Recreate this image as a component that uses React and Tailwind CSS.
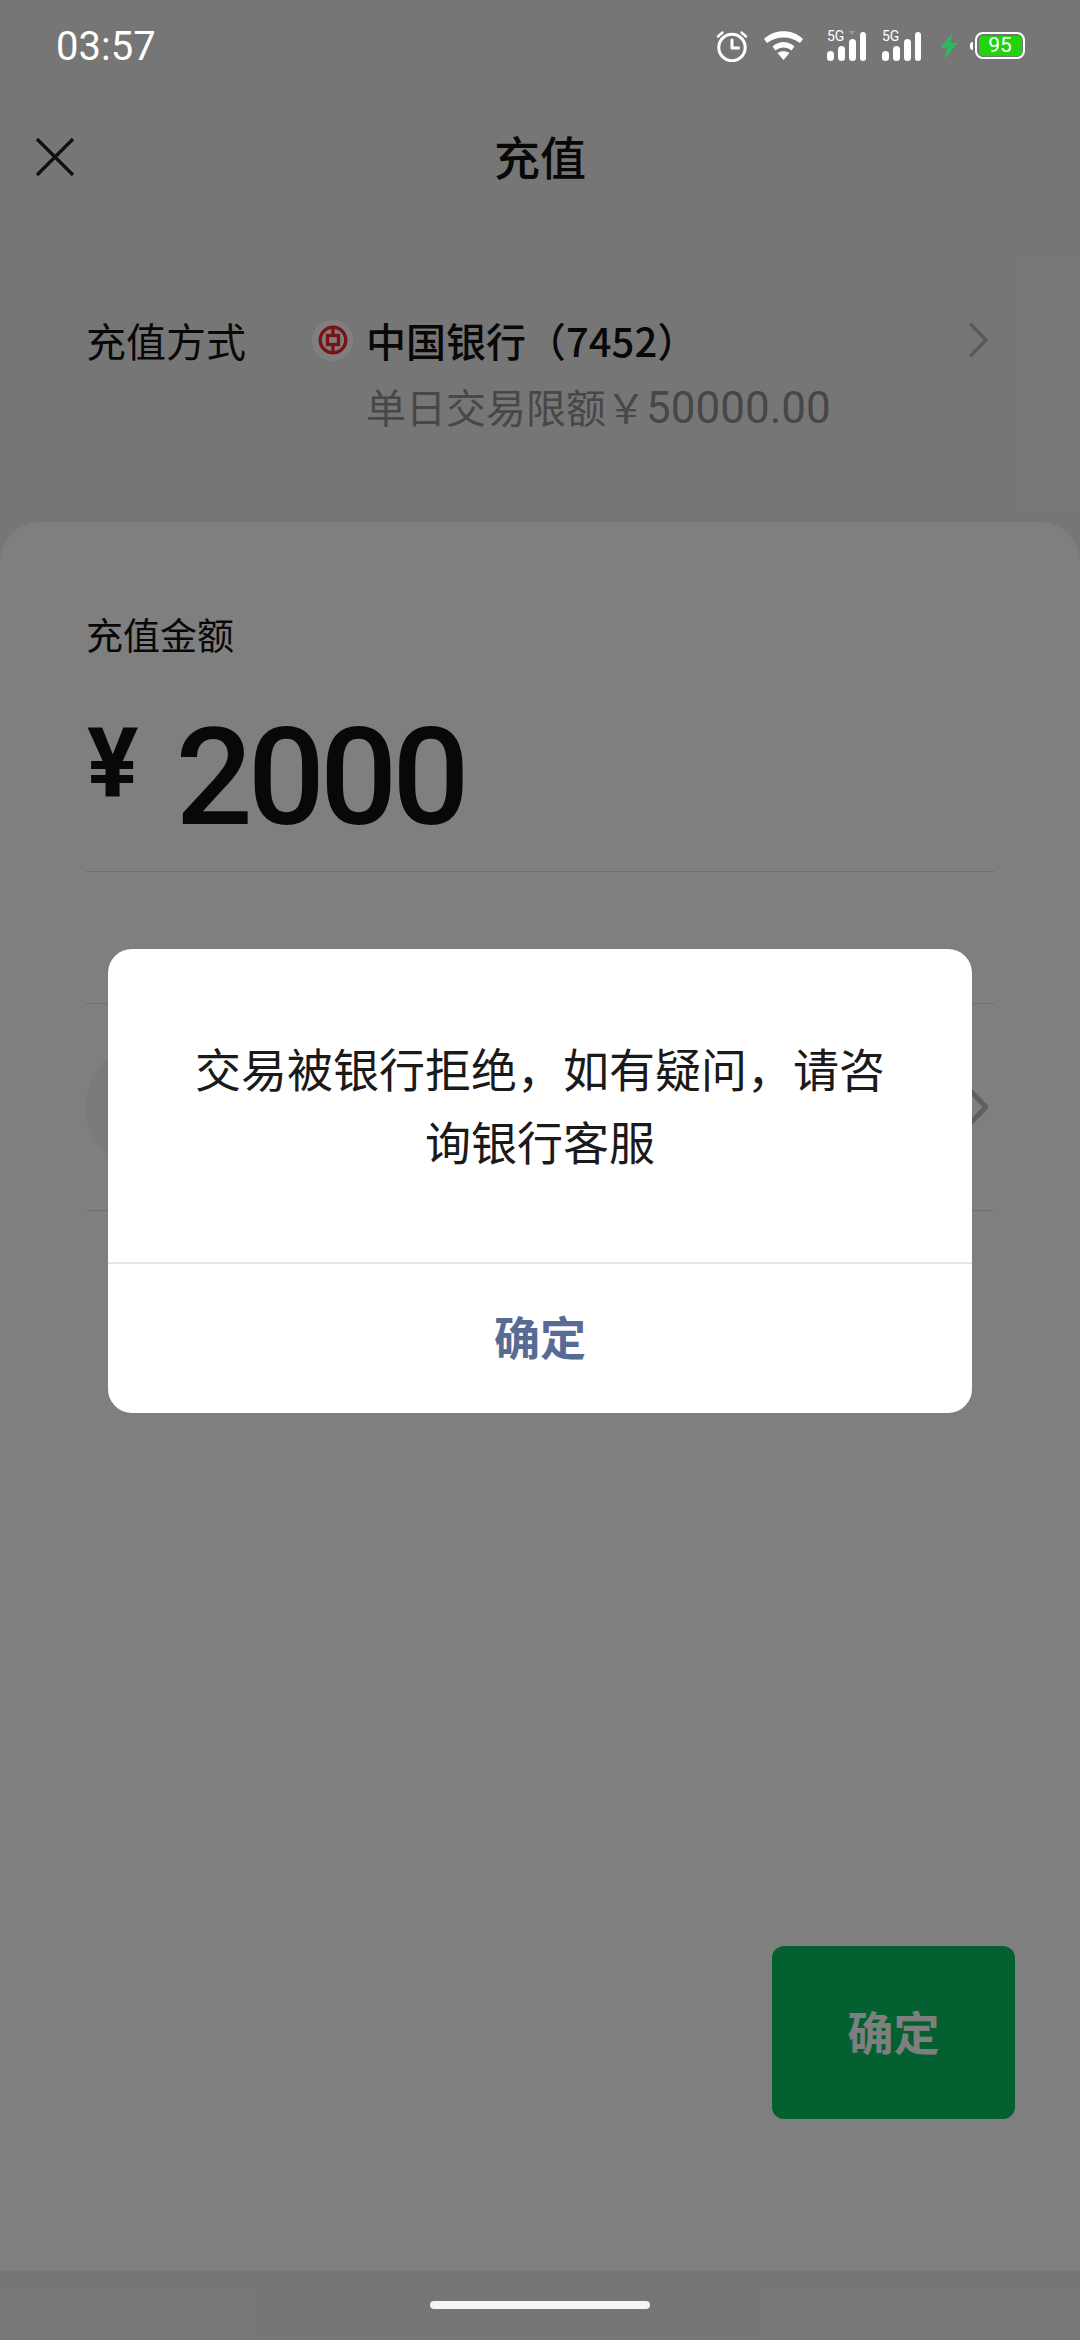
import React from 'react'

const cjk = '"Noto Sans CJK SC", "Noto Sans", sans-serif'

function Alarm() {
    return (
        <svg width="34" height="32" viewBox="0 0 34 32" fill="none" stroke="#fff" strokeLinecap="round">
            <circle cx="17" cy="17.5" r="13.2" strokeWidth="3" />
            <path d="M17 10v8h6.5" strokeWidth="3" strokeLinejoin="round" />
            <path d="M3 6.5 7.5 2.5M31 6.5 26.5 2.5" strokeWidth="2.5" />
        </svg>
    )
}

function Wifi() {
    return (
        <svg width="40" height="29" viewBox="0 0 40 29" fill="#fff">
            <path d="M0 8C10-2.5 29-2.5 39 8L36 12C27 4.5 12 4.5 3 12Z" />
            <path d="M8.5 15.5C15 9.5 24 9.5 30.5 15.5L27.5 19.5C23 15.5 16 15.5 11.5 19.5Z" />
            <path d="M13.5 22C17 19.8 22 19.8 25.5 22L19.5 29Z" />
        </svg>
    )
}

function Signal({ arrow }) {
    return (
        <div className="relative w-[39px] h-[30px]">
            <span className="absolute left-0 top-[-1px] text-[14px] leading-[12px] text-white" style={{ fontFamily: 'Roboto, sans-serif' }}>5G</span>
            {arrow && <div className="absolute left-[22px] top-0 w-0 h-0 border-x-[3px] border-t-[4px] border-x-transparent border-t-[#9a9a9a]" />}
            <div className="absolute inset-x-0 bottom-0 flex items-end justify-between">
                <div className="w-[7px] h-[10px] rounded-full bg-white" />
                <div className="w-[7px] h-[15px] rounded-full bg-white" />
                <div className="w-[7px] h-[22px] rounded-full bg-white" />
                <div className="w-[6px] h-[29px] rounded-full bg-white" />
            </div>
        </div>
    )
}

function Bolt() {
    return (
        <svg width="18" height="26" viewBox="0 0 18 26" className="ml-[19px]">
            <path d="M12.5 0 0 15h7L4.5 26 18 10h-7.5Z" fill="#2fb95e" />
        </svg>
    )
}

function Battery() {
    return (
        <div className="flex items-center ml-[12px]">
            <div className="w-[3px] h-[8px] bg-white rounded-l-full mr-[2px]" />
            <div className="w-[50px] h-[27px] rounded-[8px] border-[2.5px] border-white p-[1.5px]">
                <div className="w-full h-full rounded-[3px] bg-[#21d40e] flex items-center justify-center text-white text-[21px] leading-none" style={{ fontFamily: 'Roboto, sans-serif' }}>95</div>
            </div>
        </div>
    )
}

function BankLogo() {
    return (
        <div className="w-[41px] h-[41px] rounded-full bg-white flex items-center justify-center shrink-0">
            <svg width="30" height="30" viewBox="0 0 30 30" fill="none" stroke="#f02830" strokeWidth="3.4">
                <circle cx="15" cy="15" r="12.8" />
                <rect x="9.5" y="10.5" width="11" height="9" />
                <path d="M15 3v7.5M15 19.5V27" />
            </svg>
        </div>
    )
}

function Chevron({ className, width = 3.6, color = '#b4b4b4' }) {
    return (
        <svg width="20" height="36" viewBox="0 0 20 36" fill="none" stroke={color} strokeWidth={width} className={className}>
            <path d="M2 1.5 18 18 2 34.5" />
        </svg>
    )
}

export default function App() {
    return (
        <div className="relative w-[1080px] h-[2340px] overflow-hidden bg-[#ededed] flex flex-col text-[#111111]" style={{ fontFamily: cjk }}>
            {/* status bar stays bright above the dim layer */}
            <div className="relative z-20 h-[90px] shrink-0 flex items-center justify-between pl-[56px] pr-[55px] pt-[1px]">
                <span className="text-[40px] text-white leading-none mt-[3px]" style={{ fontFamily: 'Roboto, sans-serif' }}>03:57</span>
                <div className="flex items-center">
                    <Alarm />
                    <div className="ml-[15px]"><Wifi /></div>
                    <div className="ml-[23px]"><Signal arrow /></div>
                    <div className="ml-[16px]"><Signal /></div>
                    <Bolt />
                    <Battery />
                </div>
            </div>

            <div className="h-[136px] shrink-0 relative flex items-center justify-center pb-[6px]">
                <svg width="40" height="40" viewBox="0 0 40 40" fill="none" stroke="#222" strokeWidth="3.4" className="absolute left-[35px] top-[47px]">
                    <path d="M2 2 38 38M38 2 2 38" />
                </svg>
                <span className="text-[46px] font-medium leading-none">充值</span>
            </div>

            <div className="h-[296px] shrink-0 px-[86px] pt-[88px] flex">
                <span className="text-[40px] leading-[52px] w-[226px] shrink-0">充值方式</span>
                <div className="flex-1 min-w-0">
                    <div className="flex items-center h-[52px] relative">
                        <BankLogo />
                        <span className="ml-[13px] text-[40px] font-medium leading-none">中国银行（7452）</span>
                        <Chevron className="absolute right-[6px] top-[8px]" />
                    </div>
                    <div className="mt-[14px] ml-[54px] text-[40px] leading-[52px] text-[#8f8f8f] whitespace-nowrap">
                        单日交易限额￥<span className="text-[44px]" style={{ fontFamily: 'Roboto, sans-serif' }}>50000.00</span>
                    </div>
                </div>
            </div>

            <div className="flex-1 min-h-0 bg-white rounded-t-[40px] px-[86px] flex flex-col">
                <div className="text-[37px] leading-[48px] mt-[88px]">充值金额</div>
                <div className="flex items-start h-[150px] mt-[64px] border-b border-[#dcdcdc]" style={{ fontFamily: 'Roboto, sans-serif' }}>
                    <span className="text-[96px] font-bold leading-[96px] ml-[1px] mt-[-7px]">¥</span>
                    <span className="text-[136px] font-medium leading-[112px] tracking-[-5px] ml-[37px]">2000</span>
                </div>
                <div className="h-[132px] border-b border-[#dcdcdc]" />
                <div className="h-[207px] border-b border-[#dcdcdc] flex items-center justify-between">
                    <div className="w-[130px] h-[130px] rounded-full bg-[#f4f4f4]" />
                    <Chevron className="mr-[6px]" width={5} color="#bebebe" />
                </div>
                <div className="flex-1 min-h-0" />
                <div className="self-end w-[243px] h-[173px] mr-[-21px] mb-[152px] pb-[4px] rounded-[12px] bg-[#07c160] text-white text-[46px] font-bold flex items-center justify-center">确定</div>
            </div>

            <div className="h-[69px] shrink-0 bg-[#ededed]" />

            {/* dim layer and dialog */}
            <div className="absolute inset-0 z-10 bg-black/50" />
            <div className="absolute z-20 left-[108px] top-[949px] w-[864px] h-[464px] rounded-[24px] bg-white flex flex-col">
                <div className="h-[313px] flex items-center justify-center px-[70px] pb-[3px] text-center text-[46px] leading-[73px] text-[#1a1a1a]">交易被银行拒绝，如有疑问，请咨询银行客服</div>
                <div className="flex-1 border-t-2 border-[#e6e6e6] flex items-center justify-center pb-[7px] text-[46px] font-bold text-[#576b95]">确定</div>
            </div>
            <div className="absolute z-20 left-[430px] bottom-[31px] w-[220px] h-[8px] rounded-full bg-[#f5f5f5]" />
        </div>
    )
}
